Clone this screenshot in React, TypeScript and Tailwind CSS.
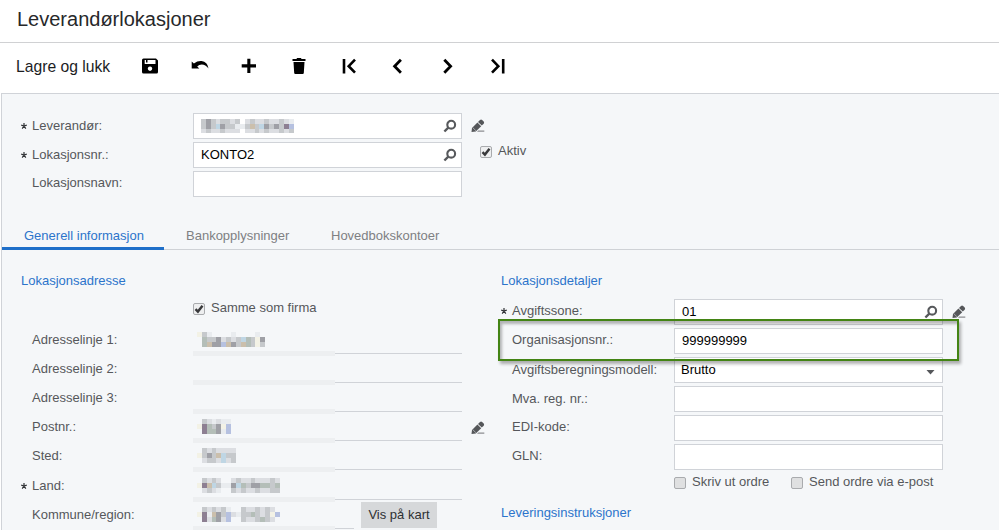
import React from "react";
import clsx from "clsx";

const MOSAIC_COLORS: Record<string, string> = {
  a: "#dcdee2",
  b: "#c6c9cc",
  c: "#9fa0a6",
  p: "#8d7f92",
  l: "#bfd6e4",
  t: "#cbbfac",
  u: "#b6c1e0",
  y: "#f3f2e6",
  g: "#b4beb8",
  w: "#e9ecef",
};

// Anonymised value: every letter is one block of the mosaic
const Mosaic: React.FC<{ rows: string[]; className?: string }> = ({
  rows,
  className,
}) => {
  const width = rows[0].length * 4.87;
  return (
    <svg
      width={width}
      height={14.7}
      className={clsx("block shrink-0", className)}
      shapeRendering="crispEdges"
    >
      {rows.map((row, y) =>
        row
          .split("")
          .map((cell, x) =>
            cell === "." ? null : (
              <rect
                key={`${x}-${y}`}
                x={x * 4.87}
                y={y * 4.9}
                width={4.87}
                height={4.9}
                fill={MOSAIC_COLORS[cell]}
              />
            ),
          ),
      )}
    </svg>
  );
};

const SearchIcon = () => (
  <svg width="14" height="14" viewBox="0 0 14 14" className="shrink-0">
    <circle cx="8.2" cy="5.7" r="3.9" fill="none" stroke="#57595c" strokeWidth="2.1" />
    <path d="M5.3 8.6L1.4 12.5" stroke="#57595c" strokeWidth="2.4" />
  </svg>
);

const PencilIcon = () => (
  <svg width="14" height="14" viewBox="0 0 14 14" className="shrink-0" fill="#55575a">
    <path d="M.5 12.9L1 8.9 6.4 3.4 10.2 7.2 4.8 12.4z" />
    <path d="M7 2.9L9 1q1.100-.9 2.100 0L12.700 2.600q.9 1 0 2.100L10.800 6.600z" />
    <path d="M2 8.9L4.9 11.700" stroke="#c9cbce" strokeWidth=".7" />
    <path d="M7.200 11.400H13.300V12.800H6z" fill="#8b8d90" />
  </svg>
);

const Checkbox: React.FC<{
  label: string;
  checked?: boolean;
  className?: string;
}> = ({ label, checked, className }) => (
  <div className={clsx("flex h-4 items-center", className)}>
    <span
      className={clsx(
        "h-3 w-3 shrink-0 rounded-[2px] border border-[#a9abae]",
        checked ? "bg-[#eeeff0]" : "bg-[#dfe0e1]",
      )}
    >
      {checked && (
        <svg width="10" height="10" viewBox="0 0 10 10" className="block">
          <path d="M1.5 5.2L3.9 7.6 8.5 1.8" fill="none" stroke="#38393b" strokeWidth="2.4" />
        </svg>
      )}
    </span>
    <span className="relative -top-px ml-1.5 whitespace-nowrap">{label}</span>
  </div>
);

const Label: React.FC<{
  text: string;
  required?: boolean;
  width?: string;
  className?: string;
}> = ({ text, required, width = "w-[172px]", className }) => (
  <div className={clsx("flex shrink-0 items-center whitespace-nowrap", width, className)}>
    <span className="w-[11px] shrink-0">
      {required && (
        <svg width="6" height="6" viewBox="0 0 6 6" className="block">
          <path
            d="M3 0V3M.2 2.2L3 3 5.8 2.2M1.2 5.6L3 3 4.8 5.6"
            fill="none"
            stroke="#303236"
            strokeWidth="1.2"
          />
        </svg>
      )}
    </span>
    {text}
  </div>
);

const Input: React.FC<{ children?: React.ReactNode; search?: boolean }> = ({
  children,
  search,
}) => (
  <div className="flex h-[26px] w-[269px] shrink-0 items-center justify-between border border-[#d0d3d8] bg-white pr-1 pl-[7px] text-black">
    <div>{children}</div>
    {search && <SearchIcon />}
  </div>
);

const SectionTitle: React.FC<{ children: React.ReactNode }> = ({ children }) => (
  <h2 className="h-5 leading-5 text-[#2c74cb]">{children}</h2>
);

const toolbar = [
  {
    name: "save",
    icon: (
      <path
        fillRule="evenodd"
        d="M2.5 1.5H15L17 3.5V15q0 1.5-1.5 1.5H2.5Q1 16.5 1 15V3q0-1.500 1.500-1.500zM3.700 3V7H14.500V3zM9 9.500a2.200 2.200 0 1 0 .01 0zM5 3H6.500V5.500H5z"
      />
    ),
  },
  {
    name: "undo",
    icon: (
      <path d="M.7 4.500L2.900 6.400Q6.500 3.700 10.500 4 16.500 4.500 17.500 11.500 14.500 7.700 10.800 7.600 8 7.600 6.200 9.400L8.300 11.500H.7z" />
    ),
  },
  { name: "add", icon: <path d="M7.300 1.700H10.400V7.300H16V10.400H10.400V16H7.300V10.400H1.700V7.300H7.300z" /> },
  {
    name: "delete",
    icon: (
      <path d="M2.500 2H6.500L7 1H11L11.500 2H15.500V4H2.500zM3.500 5H14.500L13.800 16Q13.700 17 12.700 17H5.300Q4.300 17 4.200 16z" />
    ),
  },
  {
    name: "first",
    icon: (
      <path d="M4 2V16.500M15 2.700L8.700 9.200 15 15.700" fill="none" stroke="black" strokeWidth="2.600" />
    ),
  },
  {
    name: "previous",
    icon: <path d="M11.900 2.700L5.600 9.200 11.900 15.700" fill="none" stroke="black" strokeWidth="2.800" />,
  },
  {
    name: "next",
    icon: <path d="M5.300 2.700L11.600 9.200 5.300 15.700" fill="none" stroke="black" strokeWidth="2.800" />,
  },
  {
    name: "last",
    icon: (
      <path d="M14.200 2V16.500M3 2.700L9.300 9.200 3 15.700" fill="none" stroke="black" strokeWidth="2.600" />
    ),
  },
];

interface AddressRow {
  label: string;
  height: string;
  mosaic?: string[];
  required?: boolean;
  edit?: boolean;
  button?: string;
}

const addressRows: AddressRow[] = [
  {
    label: "Adresselinje 1:",
    height: "h-[30px]",
    mosaic: ["ybw....w....w.", ".gbbcabablgbyc", ".gtccutcbtgbyb"],
  },
  { label: "Adresselinje 2:", height: "h-[29px]" },
  { label: "Adresselinje 3:", height: "h-[29px]" },
  {
    label: "Postnr.:",
    height: "h-[29px]",
    mosaic: [".bawaww", "ypgbcyu", ".pggcwu"],
    edit: true,
  },
  {
    label: "Sted:",
    height: "h-[29px]",
    mosaic: [".babaaaa", "ybcbtlbb", ".abbalab"],
  },
  {
    label: "Land:",
    height: "h-[30px]",
    mosaic: [".baba..abaabaaaba", "yptlbwwclgbccggbg", ".abaw..babaabaabb"],
    required: true,
  },
  {
    label: "Kommune/region:",
    height: "h-[29px]",
    mosaic: [".bababw..baababa.", "ypwtcbuawbbgbabyu", ".pagcau..baabgba."],
    button: "Vis på kart",
  },
];

const tabs = ["Generell informasjon", "Bankopplysninger", "Hovedbokskontoer"];

export default function App() {
  return (
    <div className="flex h-[530px] w-[999px] flex-col overflow-hidden bg-white font-['Liberation_Sans',Arial,sans-serif] text-[13px] leading-4 text-[#55575b]">
      <header className="h-[43px] shrink-0 border-b border-[#d0d1d3] pl-[17px]">
        <h1 className="text-[20px] leading-[39px] text-[#27282a]">Leverandørlokasjoner</h1>
      </header>

      <nav className="flex h-[50px] shrink-0 items-center pl-4">
        <span className="relative -top-px w-[109px] text-[15.700px] whitespace-nowrap text-[#1c1d1f]">
          Lagre og lukk
        </span>
        {toolbar.map(({ name, icon }) => (
          <button
            key={name}
            aria-label={name}
            className="flex w-[49.700px] shrink-0 items-center justify-center pb-1"
          >
            <svg width="18" height="18" viewBox="0 0 18 18">
              {icon}
            </svg>
          </button>
        ))}
      </nav>

      <main className="ml-px flex min-h-0 flex-1 flex-col border-t border-l border-[#d0d3d8] bg-[#f5f7f9]">
        <div className="flex pt-[19px] pl-[19px]">
          <div className="flex flex-col gap-[3px]">
            <div className="flex items-center">
              <Label text="Leverandør:" required className="pb-px" />
              <Input search>
                <Mosaic
                  rows={["bcbabbab.abaabaabaw", "bcblcbbwwbtblcbcbpu", "abaabaaa.aababaabab"]}
                />
              </Input>
            </div>
            <div className="flex items-center">
              <Label text="Lokasjonsnr.:" required className="pb-px" />
              <Input search>KONTO2</Input>
            </div>
            <div className="flex items-center">
              <Label text="Lokasjonsnavn:" className="pb-0.5" />
              <Input />
            </div>
          </div>
          <div className="pt-1.5 pl-[9px]">
            <PencilIcon />
            <Checkbox label="Aktiv" checked className="mt-[11px] ml-[9px]" />
          </div>
        </div>

        <div className="mt-[25px] flex h-[28px] shrink-0 border-b border-[#cfd2d6]">
          {tabs.map((tab, i) => (
            <button
              key={tab}
              className={clsx(
                "-mb-px h-[28px] text-left whitespace-nowrap",
                i === 0 &&
                  "w-[162px] border-b-[3px] border-[#1f6fc9] pt-[3px] pl-[22px] text-[#2c74cb]",
                i === 1 && "w-[145px] pl-[22px] text-[#7e8083]",
                i === 2 && "pl-[22px] text-[#7e8083]",
              )}
            >
              {tab}
            </button>
          ))}
        </div>

        <div className="flex pt-[21px] pl-[19px]">
          <section className="w-[480px] shrink-0">
            <SectionTitle>Lokasjonsadresse</SectionTitle>
            <Checkbox label="Samme som firma" checked className="mt-[10px] mb-[7px] ml-[172px]" />
            {addressRows.map((row) => (
              <div key={row.label} className={clsx("flex shrink-0", row.height)}>
                <Label text={row.label} required={row.required} className="pt-px" />
                <div
                  className={clsx(
                    "flex items-end border-b border-[#d0d3d8]",
                    row.button ? "w-[161px]" : "w-[269px]",
                  )}
                >
                  <div className="relative -bottom-[3px] h-[29px] w-[142px] border-b-[5px] border-[#edeff1]">
                    {row.mosaic && <Mosaic rows={row.mosaic} className="mt-[5px] ml-1" />}
                  </div>
                </div>
                {row.edit && (
                  <div className="pt-[9px] pl-[9px]">
                    <PencilIcon />
                  </div>
                )}
                {row.button && (
                  <button className="mt-[2px] ml-[7px] h-[26px] w-[76px] bg-[#d6d8da] pb-px whitespace-nowrap text-[#2e3033]">
                    {row.button}
                  </button>
                )}
              </div>
            ))}
          </section>

          <section className="shrink-0">
            <SectionTitle>Lokasjonsdetaljer</SectionTitle>
            <div className="mt-2 flex flex-col gap-[3px]">
              <div className="flex items-center">
                <Label text="Avgiftssone:" required width="w-[173px]" className="pb-0.5" />
                <Input search>01</Input>
                <div className="ml-[9px]">
                  <PencilIcon />
                </div>
              </div>
              <div className="relative flex items-center">
                <Label text="Organisasjonsnr.:" width="w-[173px]" className="pb-0.5" />
                <Input>999999999</Input>
                <div className="absolute -top-[9px] -left-[3px] h-[42px] w-[461px] border-2 border-[#438414] shadow-[2px_3px_3px_rgba(0,0,0,0.3),inset_2px_3px_3px_rgba(0,0,0,0.28)]" />
              </div>
              <div className="flex items-center">
                <Label text="Avgiftsberegningsmodell:" width="w-[173px]" className="pb-px" />
                <div className="flex h-[26px] w-[269px] items-center justify-between border border-[#d0d3d8] bg-white pr-[7px] pl-1.5 text-black">
                  Brutto
                  <svg width="9" height="5" viewBox="0 0 9 5" className="mt-1">
                    <path d="M.5 0H8.500L4.500 4.600z" fill="#55575a" />
                  </svg>
                </div>
              </div>
              <div className="flex items-center">
                <Label text="Mva. reg. nr.:" width="w-[173px]" className="pb-px" />
                <Input />
              </div>
              <div className="flex items-center">
                <Label text="EDI-kode:" width="w-[173px]" className="pb-0.5" />
                <Input />
              </div>
              <div className="flex items-center">
                <Label text="GLN:" width="w-[173px]" className="pb-0.5" />
                <Input />
              </div>
            </div>
            <div className="mt-[5px] mb-3 flex pl-[173px]">
              <Checkbox label="Skriv ut ordre" className="w-[117px]" />
              <Checkbox label="Send ordre via e-post" />
            </div>
            <SectionTitle>Leveringsinstruksjoner</SectionTitle>
          </section>
        </div>
      </main>
    </div>
  );
}
